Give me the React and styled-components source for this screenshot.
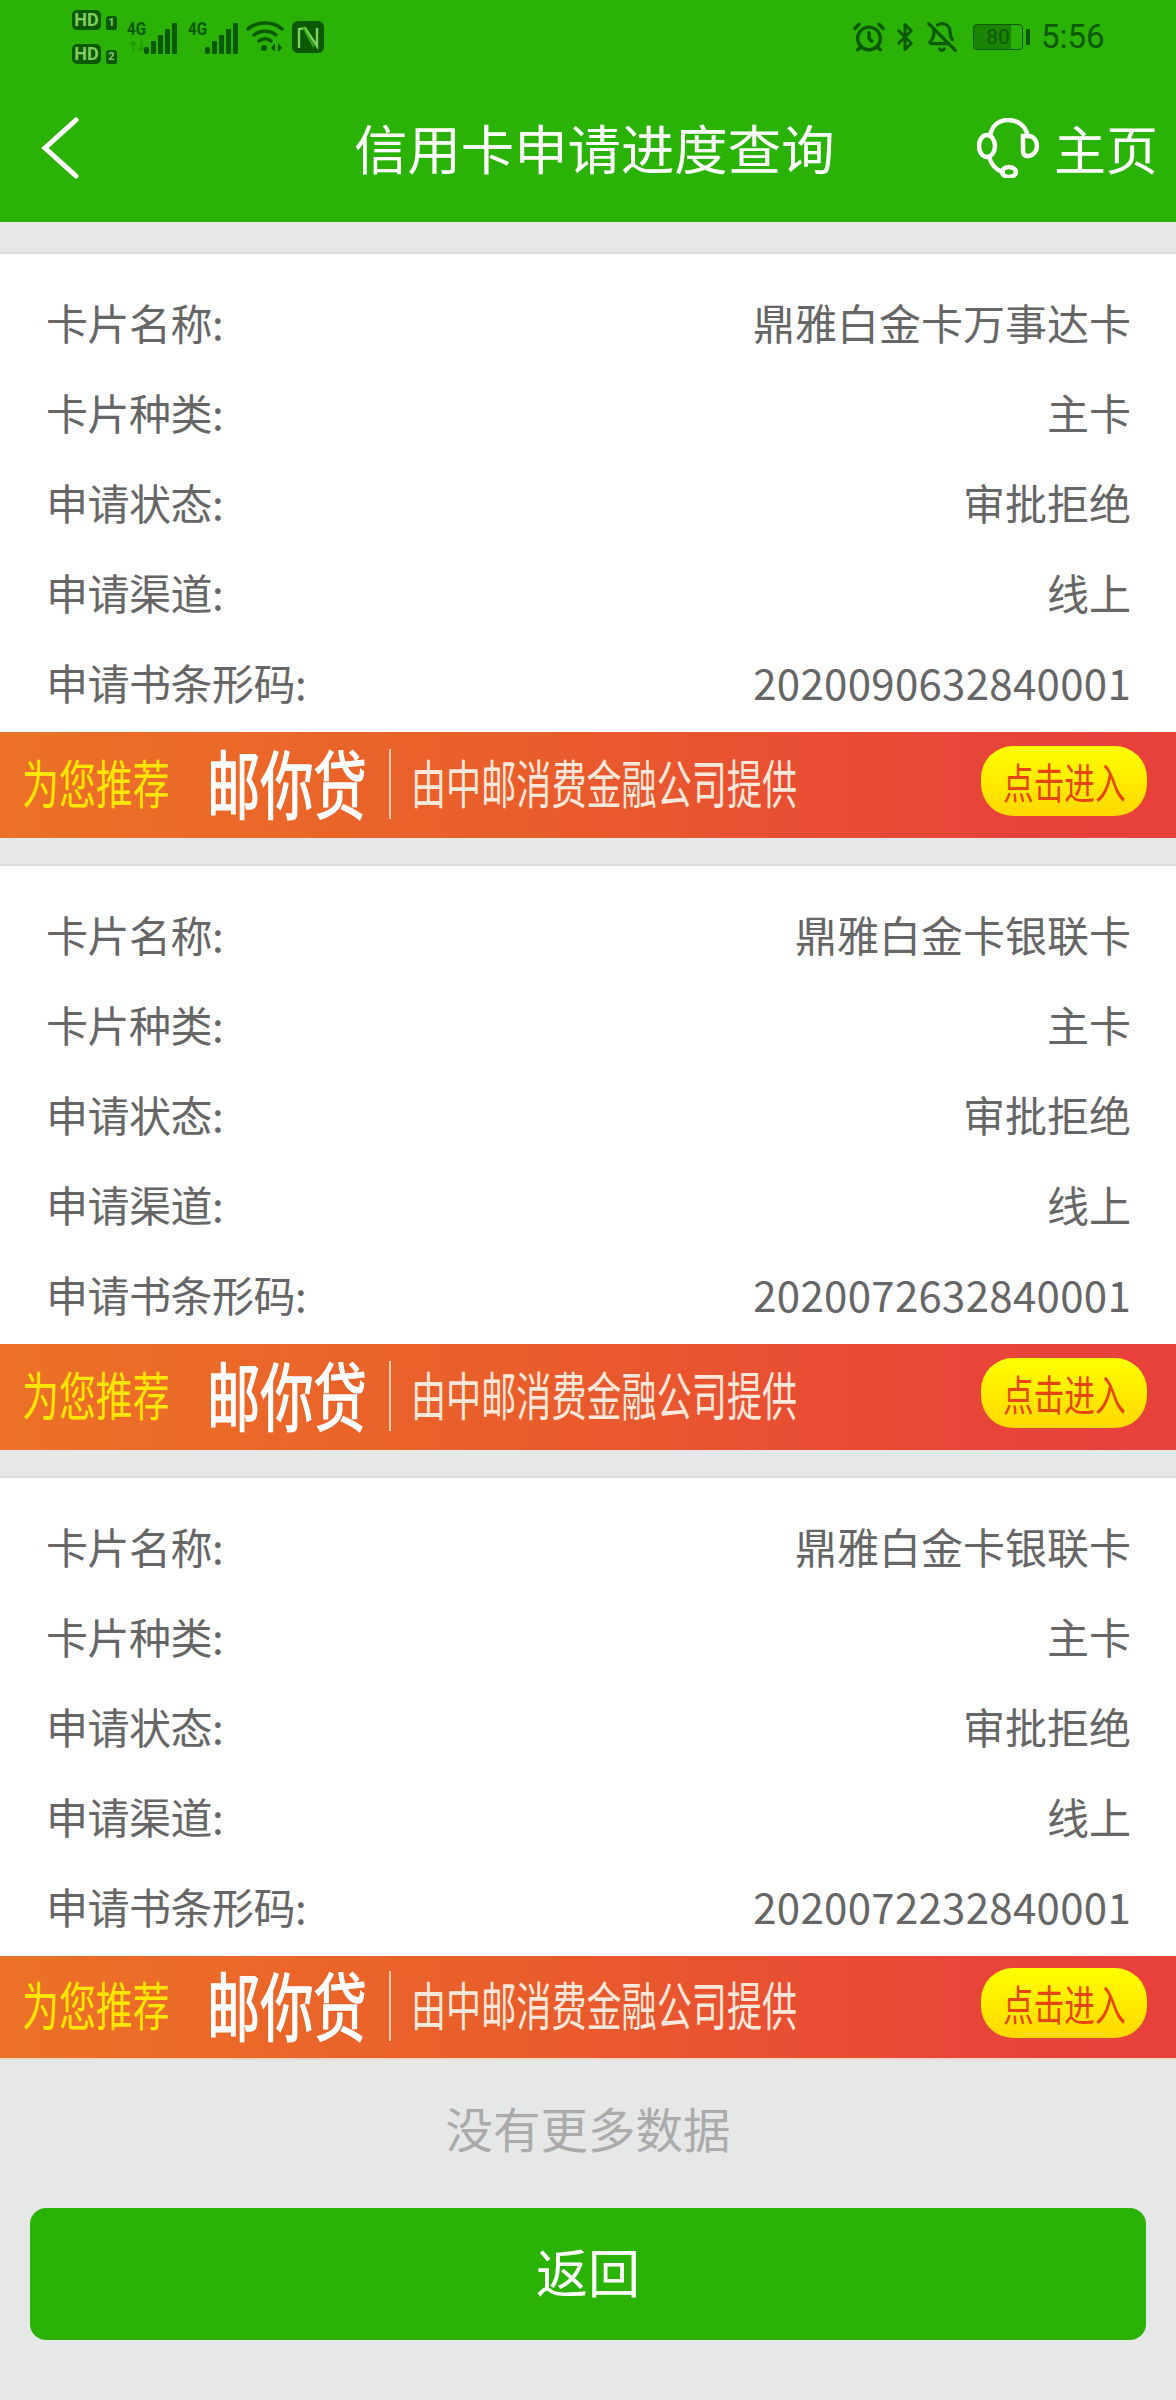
import React from 'react';
import styled, { createGlobalStyle } from 'styled-components';
import { AlarmClock, Bluetooth, BellOff } from 'lucide-react';

const GREEN = '#2bb206';
const DARK = '#0b5a00';
const CJK = '"Noto Sans CJK SC", "Noto Sans", sans-serif';

const GlobalStyle = createGlobalStyle`
  html, body {
    margin: 0;
    background: #e6e8e8;
    font-family: ${CJK};
  }
`;

const Page = styled.div`
  width: 1176px;
  height: 2400px;
  overflow: hidden;
  background: #e6e8e8;
`;

const Header = styled.header`
  height: 222px;
  background: ${GREEN};
  display: flex;
  flex-direction: column;
`;

const StatusBar = styled.div`
  height: 74px;
  display: flex;
  align-items: center;
  padding: 0 72px;
  color: ${DARK};
`;

const StatusLeft = styled.div`
  display: flex;
  align-items: center;
`;

const StatusRight = styled.div`
  display: flex;
  align-items: center;
  margin-left: auto;
`;

const SimStack = styled.div`
  display: flex;
  flex-direction: column;
  gap: 14px;
  margin-right: 10px;
`;

const SimRow = styled.div`
  display: flex;
  align-items: flex-end;
  gap: 5px;
`;

const HdBadge = styled.span`
  width: 29px;
  height: 20px;
  border-radius: 5px;
  background: ${DARK};
  color: #7fce62;
  font: 700 18px/20px "Roboto", sans-serif;
  text-align: center;
`;

const SimNumber = styled.span`
  width: 11px;
  height: 14px;
  border-radius: 3px 3px 2px 2px;
  background: ${DARK};
  color: #7fce62;
  font: 700 11px/14px "Roboto", sans-serif;
  text-align: center;
`;

const SignalWrap = styled.div`
  position: relative;
  width: 50px;
  height: 34px;
  margin-right: ${(p) => p.$gap}px;
`;

const NetLabel = styled.span`
  position: absolute;
  left: 0;
  top: 0;
  font: 700 19px/17px "Roboto", sans-serif;
  transform: scaleX(0.8);
  transform-origin: left;
`;

const NetActivity = styled.span`
  position: absolute;
  left: 1px;
  bottom: 0;
  color: #1f9604;
  font: 700 13px/14px "DejaVu Sans", sans-serif;
  letter-spacing: -3px;
`;

const Battery = styled.div`
  width: 50px;
  height: 26px;
  border: 1.5px solid ${DARK};
  border-radius: 4px;
  margin-left: 15px;
  box-sizing: border-box;
  overflow: hidden;
  display: flex;
  align-items: center;
  justify-content: center;
  font: 400 21px/24px "Roboto", sans-serif;
  background: linear-gradient(90deg, #1c8404 78%, transparent 78%);
`;

const BatteryNub = styled.span`
  width: 4px;
  height: 16px;
  border-radius: 1px;
  background: ${DARK};
  margin: 0 11px 0 3px;
`;

const Time = styled.span`
  font: 400 33px/36px "Roboto", sans-serif;
  width: 63px;
  white-space: nowrap;
`;

const NavBar = styled.div`
  flex: 1;
  display: grid;
  grid-template-columns: 313px 1fr auto;
  align-items: center;
  padding: 0 18px 0 41px;
  color: #fff;
`;

const Title = styled.h1`
  margin: 0 0 3px;
  font-size: 53.4px;
  font-weight: 400;
  line-height: 60px;
`;

const HomeLink = styled.div`
  display: flex;
  align-items: center;
  gap: 15px;
  font-size: 52px;
  line-height: 60px;
`;

const Card = styled.section`
  margin-top: ${(p) => (p.$first ? 30 : 26)}px;
  border-top: 2px solid #dcdddd;
  background: #fff;
  padding-top: 27px;
`;

const Row = styled.div`
  box-sizing: border-box;
  height: 89.8px;
  padding: 0 45px 8px 46px;
  display: flex;
  align-items: center;
  justify-content: space-between;
  color: #666;
  font-size: 42px;
`;

const Label = styled.span`
  letter-spacing: -0.5px;
`;

const Code = styled.span`
  letter-spacing: 0.3px;
`;

const Banner = styled.div`
  box-sizing: border-box;
  height: ${(p) => (p.$last ? 104 : 106)}px;
  margin-top: 2px;
  display: flex;
  align-items: center;
  padding: 0 29px 6px 22px;
  background: linear-gradient(90deg, #ec7127 0%, #e95d2b 45%, #e8443a 85%, #e8403c 100%);
  ${(p) => p.$last && 'border-bottom: 2px solid #f7d9c8;'}
`;

const Squeezed = styled.span`
  display: block;
  width: ${(p) => p.$width}px;
  font-size: ${(p) => p.$size}px;
  line-height: 1;
  font-weight: 400;
  color: ${(p) => p.$color};
  white-space: nowrap;
  transform: scaleX(${(p) => p.$scale});
  transform-origin: left center;
  -webkit-text-stroke: ${(p) => p.$stroke || 0}px ${(p) => p.$color};
`;

const Slogan = styled(Squeezed)`
  margin-top: -2px;
`;

const BannerDivider = styled.span`
  width: 2px;
  height: 70px;
  margin: 5px 20px 0 22px;
  background: #f6c9a8;
`;

const EnterButton = styled.span`
  width: 166px;
  height: 70px;
  margin-left: auto;
  margin-top: -2px;
  padding-left: 22px;
  box-sizing: border-box;
  border-radius: 32px;
  display: flex;
  align-items: center;
  background: linear-gradient(180deg, #ffff00 0%, #ffd800 100%);
`;

const Footer = styled.div`
  display: flex;
  flex-direction: column;
  align-items: center;
`;

const NoMore = styled.div`
  margin-top: 38px;
  font-size: 47.5px;
  line-height: 60px;
  color: #ababab;
`;

const BackButton = styled.button`
  width: 1116px;
  height: 132px;
  margin-top: 50px;
  padding: 0 0 6px;
  border: 0;
  border-radius: 16px;
  background: ${GREEN};
  color: #fff;
  font-family: ${CJK};
  font-size: 52px;
`;

const IconBox = styled.span`
  display: flex;
  margin-left: ${(p) => p.$left || 0}px;
`;

const cards = [
  { name: '鼎雅白金卡万事达卡', code: '2020090632840001' },
  { name: '鼎雅白金卡银联卡', code: '2020072632840001' },
  { name: '鼎雅白金卡银联卡', code: '2020072232840001' },
];

const Bars = () => (
  <svg width="33" height="31" viewBox="0 0 33 31" style={{ position: 'absolute', right: 0, bottom: 0 }}>
    <g fill={DARK}>
      <rect x="0" y="24" width="5" height="7" rx="2" />
      <rect x="7" y="18" width="5" height="13" rx="1" />
      <rect x="14" y="12" width="5" height="19" rx="1" />
      <rect x="21" y="6" width="5" height="25" rx="1" />
      <rect x="28" y="0" width="5" height="31" rx="1" />
    </g>
  </svg>
);

const Wifi = () => (
  <svg width="38" height="32" viewBox="0 0 38 32" fill="none" stroke={DARK} strokeWidth="3.4" strokeLinecap="round">
    <path d="M2 8C11 0 27 0 36 8" />
    <path d="M8 14c6-5 16-5 22 0" />
    <path d="M13 20c3-3 9-3 12 0" />
    <circle cx="18" cy="27" r="3" fill={DARK} stroke="none" />
    <path d="M29 22l-4 5 4 4zM32 22l4 5-4 4z" fill={DARK} stroke="none" />
  </svg>
);

const Nfc = () => (
  <svg width="32" height="32" viewBox="0 0 32 32">
    <rect width="32" height="32" rx="6" fill={DARK} />
    <path d="M7 27V8l6-1 12 18V7" fill="none" stroke="#7fce62" strokeWidth="2.4" />
    <path d="M11 6l11 20" fill="none" stroke={GREEN} strokeWidth="2" />
  </svg>
);

const Chevron = () => (
  <svg width="38" height="62" viewBox="0 0 38 62" fill="none" stroke="#fff" strokeWidth="5" strokeLinecap="round">
    <path d="M35 3L4 31l31 28" />
  </svg>
);

const Headset = () => (
  <svg width="62" height="60" viewBox="0 0 62 60" fill="none" stroke="#fff" strokeWidth="4.5" strokeLinecap="round">
    <path d="M13 18C15 7 22 2 31 2s17 5 20 16" />
    <ellipse cx="10" cy="28" rx="8" ry="11" />
    <path d="M46 18h5c6 0 9 5 9 10s-4 10-9 10h-1c-3 0-4-3-4-6z" />
    <path d="M12 39c2 7 7 13 14 15" />
    <ellipse cx="32" cy="54" rx="7" ry="5" />
  </svg>
);

const App = () => (
  <Page>
    <GlobalStyle />
    <Header>
      <StatusBar>
        <StatusLeft>
          <SimStack>
            <SimRow><HdBadge>HD</HdBadge><SimNumber>1</SimNumber></SimRow>
            <SimRow><HdBadge>HD</HdBadge><SimNumber>2</SimNumber></SimRow>
          </SimStack>
          <SignalWrap $gap={11}><NetLabel>4G</NetLabel><NetActivity>↑↓</NetActivity><Bars /></SignalWrap>
          <SignalWrap $gap={8}><NetLabel>4G</NetLabel><Bars /></SignalWrap>
          <Wifi />
          <IconBox $left={8}><Nfc /></IconBox>
        </StatusLeft>
        <StatusRight>
          <AlarmClock size={34} strokeWidth={2.4} />
          <IconBox $left={4}><Bluetooth size={30} strokeWidth={2.4} /></IconBox>
          <IconBox $left={6}><BellOff size={32} strokeWidth={2.4} /></IconBox>
          <Battery>80</Battery>
          <BatteryNub />
          <Time>5:56</Time>
        </StatusRight>
      </StatusBar>
      <NavBar>
        <Chevron />
        <Title>信用卡申请进度查询</Title>
        <HomeLink><Headset />主页</HomeLink>
      </NavBar>
    </Header>

    {cards.map((card, i) => (
      <Card key={card.code} $first={i === 0}>
        <Row><Label>卡片名称:</Label><span>{card.name}</span></Row>
        <Row><Label>卡片种类:</Label><span>主卡</span></Row>
        <Row><Label>申请状态:</Label><span>审批拒绝</span></Row>
        <Row><Label>申请渠道:</Label><span>线上</span></Row>
        <Row><Label>申请书条形码:</Label><Code>{card.code}</Code></Row>
        <Banner $last={i === 2}>
          <Squeezed $size={52} $width={185} $scale={0.71} $color="#ffe600">为您推荐</Squeezed>
          <Slogan $size={74} $width={160} $scale={0.72} $stroke={1.5} $color="#fff">邮你贷</Slogan>
          <BannerDivider />
          <Squeezed $size={52} $width={400} $scale={0.675} $color="#fde6da">由中邮消费金融公司提供</Squeezed>
          <EnterButton>
            <Squeezed $size={42} $width={124} $scale={0.73} $color="#e8450a">点击进入</Squeezed>
          </EnterButton>
        </Banner>
      </Card>
    ))}

    <Footer>
      <NoMore>没有更多数据</NoMore>
      <BackButton>返回</BackButton>
    </Footer>
  </Page>
);

export default App;
